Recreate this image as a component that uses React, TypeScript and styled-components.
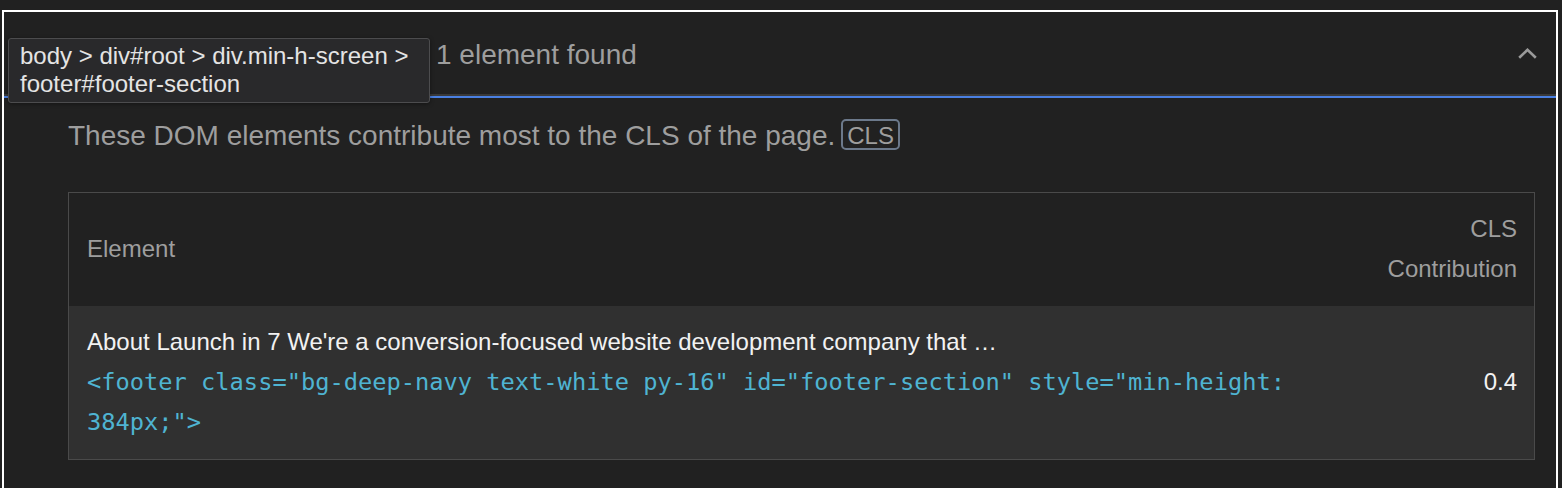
import React from 'react';
import styled, { createGlobalStyle } from 'styled-components';

const GlobalStyle = createGlobalStyle`
  html, body {
    margin: 0;
    padding: 0;
    background: #212121;
  }
  body {
    font-family: 'Liberation Sans', Arial, sans-serif;
    color: #9e9e9e;
    overflow: hidden;
  }
`;

const Page = styled.div`
  padding: 10px 0 0 2px;
  height: 100vh;
  box-sizing: border-box;
`;

const Frame = styled.div`
  width: 1556px;
  min-height: 520px;
  box-sizing: border-box;
  border: 2px solid #ffffff;
  border-bottom: none;
`;

// the audit title sits under the hovering tooltip, so only the display value shows
const Header = styled.div`
  position: relative;
  display: flex;
  align-items: center;
  height: 84px;
  padding: 3px 19px 0 432px;
  box-sizing: border-box;
  border-bottom: 2px solid #3a3a3a;
`;

const AccentBar = styled.div`
  height: 2px;
  background: #4a80e2;
`;

const DisplayValue = styled.span`
  flex: 1;
  font-size: 28px;
  color: #9e9e9e;
`;

const Chevron = styled.svg`
  display: block;
  flex: none;
  margin-top: -3px;
`;

const Tooltip = styled.div`
  position: absolute;
  left: 4px;
  top: 26px;
  width: 422px;
  height: 65px;
  box-sizing: border-box;
  padding: 3px 11px;
  background: #29292b;
  border: 1px solid #4c4c4e;
  border-radius: 3px;
  box-shadow: 0 1px 4px rgba(0, 0, 0, 0.4);
  color: #e4e4e4;
  font-size: 24px;
  line-height: 28px;
  z-index: 2;
`;

const Content = styled.div`
  padding: 18px 21px 0 64px;
`;

const Description = styled.div`
  font-size: 28px;
  line-height: 40px;
  color: #9e9e9e;
`;

const Badge = styled.span`
  display: inline-block;
  margin-left: 6px;
  padding: 0 4px;
  height: 31px;
  line-height: 30px;
  box-sizing: border-box;
  border: 2px solid #6c798b;
  border-radius: 5px;
  font-size: 24px;
  color: #9e9e9e;
  vertical-align: 1px;
`;

const Table = styled.div`
  margin-top: 36px;
  display: grid;
  grid-template-columns: 1fr 170px;
  border: 1px solid #4a4a4a;
  font-size: 24px;
  line-height: 40px;
`;

const Cell = styled.div<{ $head?: boolean; $right?: boolean }>`
  display: flex;
  flex-direction: column;
  justify-content: center;
  align-items: ${p => (p.$right ? 'flex-end' : 'flex-start')};
  text-align: ${p => (p.$right ? 'right' : 'left')};
  padding: 16px 17px 17px 18px;
  background: ${p => (p.$head ? '#212121' : '#303030')};
  color: ${p => (p.$head ? '#9e9e9e' : '#f2f2f2')};
`;

const NodeText = styled.div`
  color: #f2f2f2;
`;

const Snippet = styled.div`
  font-family: 'DejaVu Sans Mono', 'Liberation Mono', monospace;
  font-size: 23.7px;
  color: #4fb4d2;
`;

const App = () => {
  return (
    <Page>
      <GlobalStyle />
      <Frame>
        <Header>
          <DisplayValue>1 element found</DisplayValue>
          <Chevron width="19" height="11" viewBox="0 0 19 11">
            <path d="M1.2 9.8 L9.5 1.8 L17.8 9.8" fill="none" stroke="#9a9a9a" strokeWidth="2.6" />
          </Chevron>
          <Tooltip>
            body &gt; div#root &gt; div.min-h-screen &gt;
            <br />
            footer#footer-section
          </Tooltip>
        </Header>
        <AccentBar />
        <Content>
          <Description>
            These DOM elements contribute most to the CLS of the page.
            <Badge>CLS</Badge>
          </Description>
          <Table>
            <Cell $head>Element</Cell>
            <Cell $head $right>CLS Contribution</Cell>
            <Cell>
              <NodeText>About Launch in 7 We're a conversion-focused website development company that …</NodeText>
              <Snippet>
                &lt;footer class="bg-deep-navy text-white py-16" id="footer-section" style="min-height: 384px;"&gt;
              </Snippet>
            </Cell>
            <Cell $right>0.4</Cell>
          </Table>
        </Content>
      </Frame>
    </Page>
  );
};

export default App;
